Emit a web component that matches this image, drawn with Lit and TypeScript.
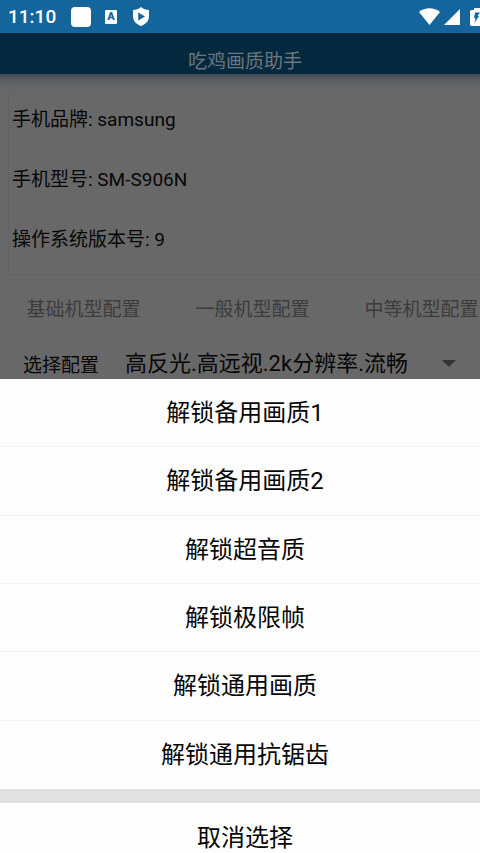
import { LitElement, html, css } from "lit";
import { customElement, property } from "lit/decorators.js";

@customElement("status-bar")
export class StatusBar extends LitElement {
  static styles = css`
    :host {
      display: flex;
      align-items: center;
      justify-content: space-between;
      height: 33px;
      flex: none;
      padding-left: 8px;
      color: #fff;
      background: #14659c;
    }
    .group {
      display: flex;
      align-items: center;
    }
    .time {
      font-size: 19px;
      font-weight: 500;
      width: 63px;
    }
    .square {
      width: 20px;
      height: 20px;
      border-radius: 4px;
      background: #fff;
    }
    svg {
      display: block;
      fill: #fff;
    }
    .letter {
      width: 12px;
      height: 14px;
      margin: 0 16px 0 14px;
      border-radius: 1px;
      background: #fff;
      color: #14659c;
      font-size: 11px;
      font-weight: 900;
      line-height: 13px;
      text-align: center;
    }
    .signals {
      gap: 4px;
    }
    .battery {
      margin-left: 6px;
    }
  `;

  render() {
    return html`
      <div class="group">
        <span class="time">11:10</span>
        <span class="square"></span>
        <span class="letter">A</span>
        <svg width="16" height="19" viewBox="0 0 16 19">
          <path fill-rule="evenodd" d="M8 0C6 2 3 3 0 3v6c0 5 3 8 8 10 5-2 8-5 8-10V3c-3 0-6-1-8-3zM5.200 5.500v8L12 9.500z" />
        </svg>
      </div>
      <div class="group signals">
        <svg width="21" height="17" viewBox="0 0 21 17">
          <path d="M0 4C6-1 15-1 21 4L10.500 17z" />
        </svg>
        <svg width="16" height="16" viewBox="0 0 16 16"><path d="M16 0v16H0z" /></svg>
        <svg class="battery" width="14" height="18" viewBox="0 0 14 18">
          <path fill-rule="evenodd" d="M1 2h3V0h6v2h3l1 1v14l-1 1H1l-1-1V3zM5 4.500h5L7.500 8H9L4.500 15l1-5H4z" />
        </svg>
      </div>
    `;
  }
}

@customElement("config-page")
export class ConfigPage extends LitElement {
  static styles = css`
    :host {
      display: block;
      flex: none;
      background: #686868;
      color: #060606;
    }
    h1 {
      display: flex;
      align-items: center;
      justify-content: center;
      height: 41px;
      margin: 0;
      padding-top: 12px;
      box-sizing: border-box;
      font-size: 19px;
      font-weight: 400;
      color: #6c767c;
      background: #04293f;
    }
    .shade {
      height: 17px;
      background: linear-gradient(#3c4a53, #5d6164 40%, #686868);
    }
    .info {
      display: grid;
      grid-auto-rows: 60px;
      align-items: center;
      margin: 0 0 0 8px;
      padding: 0 0 2px 3px;
      border: 1px solid #626262;
      border-right: 0;
      font-size: 19px;
    }
    .info p {
      margin: 0;
      padding-bottom: 10px;
    }
    .tabs {
      display: grid;
      grid-template-columns: repeat(3, 169px);
      height: 66px;
    }
    .tabs button {
      padding: 0 2px 2px 0;
      border: 0;
      background: none;
      font: inherit;
      font-size: 19px;
      color: #3c3c3c;
    }
    .choice {
      display: flex;
      align-items: center;
      height: 38px;
      padding: 6px 34px 0 23px;
      box-sizing: border-box;
      overflow: hidden;
    }
    label {
      font-size: 19px;
      margin-right: 26px;
    }
    select {
      flex: 1;
      min-width: 0;
      height: 32px;
      padding: 0;
      border: 0;
      appearance: none;
      background: none;
      color: inherit;
      font: inherit;
      font-size: 22px;
    }
    svg {
      display: block;
      flex: none;
      fill: #333;
    }
  `;

  render() {
    return html`
      <h1>吃鸡画质助手</h1>
      <div class="shade"></div>
      <section class="info">
        <p>手机品牌: samsung</p>
        <p>手机型号: SM-S906N</p>
        <p>操作系统版本号: 9</p>
      </section>
      <nav class="tabs">
        ${["基础机型配置", "一般机型配置", "中等机型配置"].map(
          (name) => html`<button type="button">${name}</button>`
        )}
      </nav>
      <div class="choice">
        <label for="config">选择配置</label>
        <select id="config">
          <option>高反光.高远视.2k分辨率.流畅</option>
        </select>
        <svg width="14" height="7" viewBox="0 0 14 7"><path d="M0 0h14L7 7z" /></svg>
      </div>
    `;
  }
}

@customElement("action-sheet")
export class ActionSheet extends LitElement {
  @property({ attribute: false }) options: string[] = [];

  static styles = css`
    :host {
      display: block;
      flex: none;
      background: #fefefe;
    }
    .list {
      display: grid;
      grid-auto-rows: 1fr;
      height: 410px;
    }
    button {
      display: block;
      width: 100%;
      padding: 0 0 4px;
      border: 0;
      background: none;
      color: #060606;
      font: inherit;
      font-size: 24px;
    }
    .list button:not(:last-child) {
      border-bottom: 1px solid #f1f1f1;
    }
    .cancel {
      height: 82px;
      border-top: 14px solid #e2e1e2;
    }
  `;

  render() {
    return html`
      <div class="list">
        ${this.options.map((name) => html`<button type="button">${name}</button>`)}
      </div>
      <button type="button" class="cancel">取消选择</button>
    `;
  }
}

@customElement("app-root")
export class AppRoot extends LitElement {
  static styles = css`
    :host {
      display: block;
      height: 100vh;
      overflow: hidden;
      background: #fefefe;
      font-family: Roboto, "Noto Sans CJK SC", sans-serif;
    }
    .screen {
      display: flex;
      flex-direction: column;
      width: calc(100% + 10px);
    }
    status-bar {
      padding-right: 6px;
    }
  `;

  private options = [
    "解锁备用画质1",
    "解锁备用画质2",
    "解锁超音质",
    "解锁极限帧",
    "解锁通用画质",
    "解锁通用抗锯齿",
  ];

  render() {
    return html`
      <main class="screen">
        <status-bar></status-bar>
        <config-page></config-page>
        <action-sheet .options=${this.options}></action-sheet>
      </main>
    `;
  }
}
